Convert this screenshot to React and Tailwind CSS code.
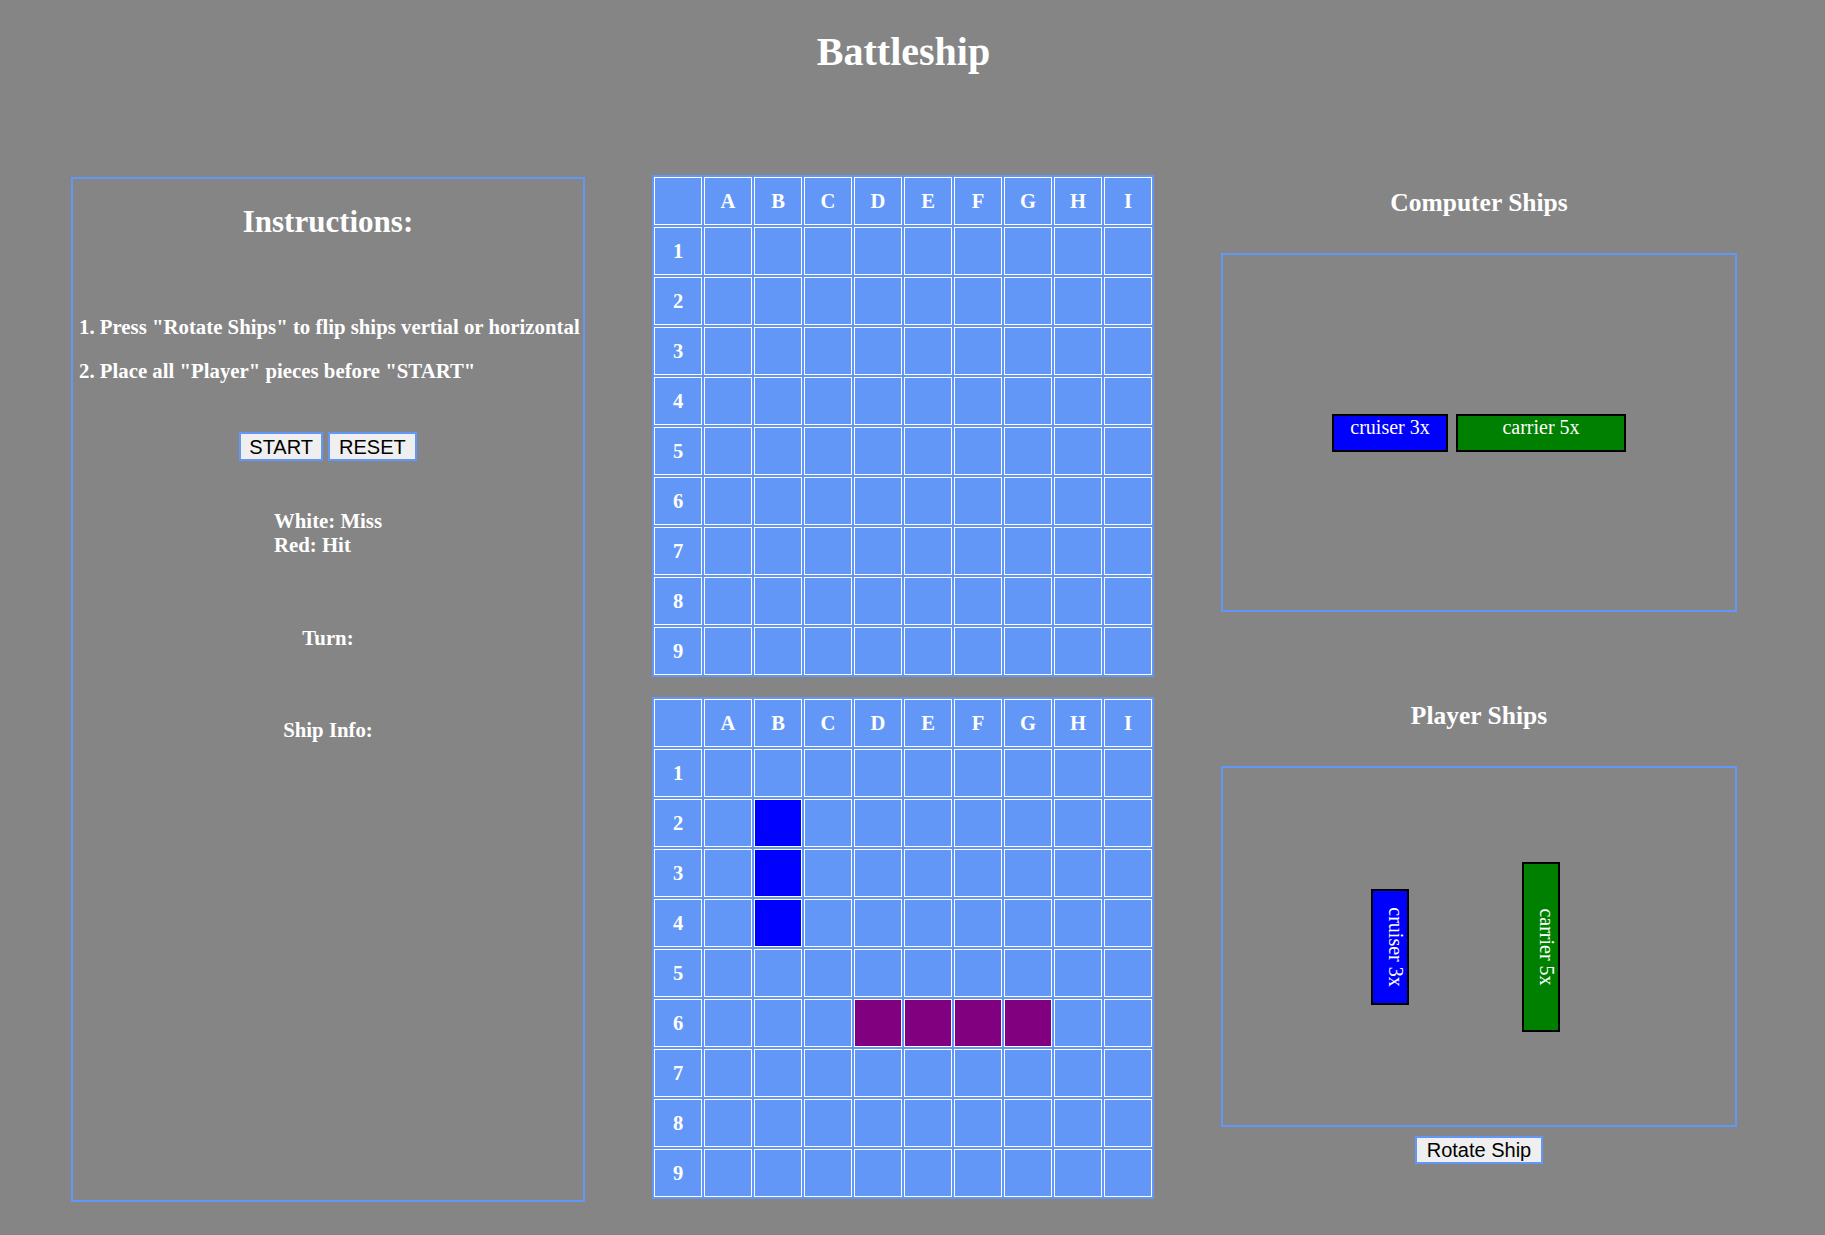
const LETTERS = ['A', 'B', 'C', 'D', 'E', 'F', 'G', 'H', 'I'];
const ROWS = [1, 2, 3, 4, 5, 6, 7, 8, 9];

const serif = { fontFamily: '"Liberation Serif", "Times New Roman", serif' };

// cells already holding a player ship
const placed = {
    'B2': 'bg-[#0000ff]', 'B3': 'bg-[#0000ff]', 'B4': 'bg-[#0000ff]',
    'D6': 'bg-[#800080]', 'E6': 'bg-[#800080]', 'F6': 'bg-[#800080]', 'G6': 'bg-[#800080]',
};

function Board({ ships = {} }) {
    return (
        <div className="grid grid-cols-10 gap-[2px] p-[2px] bg-[#6397f7] w-[502px]">
            <div className="h-[48px] border border-white" />
            {LETTERS.map((l) => (
                <div key={l} className="h-[48px] border border-white flex items-center justify-center text-white font-bold text-[20.5px]">
                    {l}
                </div>
            ))}
            {ROWS.map((r) => (
                <div key={r} className="contents">
                    <div className="h-[48px] border border-white flex items-center justify-center text-white font-bold text-[20.5px]">
                        {r}
                    </div>
                    {LETTERS.map((l) => (
                        <div key={l + r} className={`h-[48px] border border-white ${ships[l + r] || ''}`} />
                    ))}
                </div>
            ))}
        </div>
    );
}

function Ships({ rotated }) {
    const turn = rotated ? 'rotate-90' : '';
    return (
        <div className="flex items-center justify-center gap-[8px]">
            <div className={`w-[116px] h-[38px] bg-[#0000ff] border-2 border-black text-white text-[20px] leading-[23px] text-center ${turn}`}>
                cruiser 3x
            </div>
            <div className={`w-[170px] h-[38px] bg-[#008000] border-2 border-black text-white text-[20px] leading-[23px] text-center ${turn}`}>
                carrier 5x
            </div>
        </div>
    );
}

export default function App() {
    const btn = 'h-[29px] border-2 border-[#6397f7] bg-[#efefef] text-black text-[20px] leading-none';
    const sans = { fontFamily: '"Liberation Sans", Arial, sans-serif' };

    return (
        <div className="min-h-screen w-full bg-[#858585] text-white pb-[40px]" style={serif}>
            <h1 className="pt-[29px] pr-[18px] text-center text-[40px] leading-[46px] font-bold">Battleship</h1>

            <div className="mt-[100px] flex items-start pl-[71px] gap-[67px]">
                {/* instructions */}
                <div className="mt-[2px] w-[514px] h-[1025px] border-2 border-[#6397f7] flex flex-col">
                    <h2 className="mt-[26px] text-center text-[31px] leading-[34px] font-bold">Instructions:</h2>
                    <p className="mt-[76px] pl-[6px] text-[20.8px] leading-[23px] font-bold whitespace-nowrap">
                        1. Press "Rotate Ships" to flip ships vertial or horizontal
                    </p>
                    <p className="mt-[21px] pl-[6px] text-[20.8px] leading-[23px] font-bold">
                        2. Place all "Player" pieces before "START"
                    </p>
                    <div className="mt-[50px] flex justify-center gap-[5px]" style={sans}>
                        <button className={`${btn} px-[8px]`}>START</button>
                        <button className={`${btn} px-[9px]`}>RESET</button>
                    </div>
                    <div className="mt-[48px] flex justify-center">
                        <div className="text-left text-[20.8px] leading-[24px] font-bold">
                            <div>White: Miss</div>
                            <div>Red: Hit</div>
                        </div>
                    </div>
                    <p className="mt-[69px] text-center text-[20.8px] leading-[24px] font-bold">Turn:</p>
                    <p className="mt-[68px] text-center text-[20.8px] leading-[24px] font-bold">Ship Info:</p>
                </div>

                {/* boards */}
                <div className="flex flex-col gap-[20px]">
                    <Board />
                    <Board ships={placed} />
                </div>

                {/* ship docks */}
                <div className="w-[516px] flex flex-col items-center">
                    <h3 className="mt-[14px] text-[25.5px] leading-[27px] font-bold">Computer Ships</h3>
                    <div className="mt-[37px] w-full h-[359px] border-2 border-[#6397f7] flex items-center justify-center">
                        <Ships />
                    </div>
                    <h3 className="mt-[90px] text-[25.5px] leading-[27px] font-bold">Player Ships</h3>
                    <div className="mt-[37px] w-full h-[361px] border-2 border-[#6397f7] flex items-center justify-center">
                        <Ships rotated />
                    </div>
                    <button className="mt-[9px] h-[28px] px-[10px] border-2 border-[#6397f7] bg-[#efefef] text-black text-[20px] leading-none" style={sans}>
                        Rotate Ship
                    </button>
                </div>
            </div>
        </div>
    );
}
